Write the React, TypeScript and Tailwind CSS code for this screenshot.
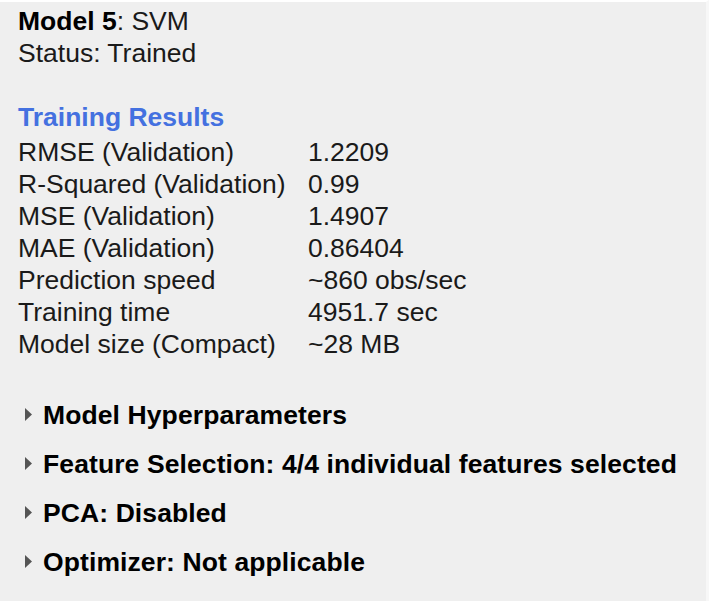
const results: [string, string][] = [
  ["RMSE (Validation)", "1.2209"],
  ["R-Squared (Validation)", "0.99"],
  ["MSE (Validation)", "1.4907"],
  ["MAE (Validation)", "0.86404"],
  ["Prediction speed", "~860 obs/sec"],
  ["Training time", "4951.7 sec"],
  ["Model size (Compact)", "~28 MB"],
];

const sections = [
  "Model Hyperparameters",
  "Feature Selection: 4/4 individual features selected",
  "PCA: Disabled",
  "Optimizer: Not applicable",
];

function Caret() {
  return (
    <svg width="10" height="17" viewBox="0 0 10 17" className="shrink-0">
      <polygon points="2,2 9,8.5 2,15" fill="#555555" />
    </svg>
  );
}

export default function App() {
  return (
    <div className="w-[709px] min-h-[601px] bg-[#efefef] border-t-2 border-t-white border-r-[3px] border-r-[#f7f7f7] pl-[18px] pt-[3px] font-['Liberation_Sans',Arial,sans-serif] text-[26.5px] leading-[32px] text-[#1a1a1a]">
      {/* Model header */}
      <div>
        <span className="font-bold text-black">Model 5</span>: SVM
      </div>
      <div>Status: Trained</div>

      {/* Training results */}
      <div className="mt-[32px] mb-[3px] font-bold text-[#4471e0]">Training Results</div>
      <div className="grid grid-cols-[290px_1fr]">
        {results.map(([label, value]) => (
          <div key={label} className="contents">
            <span className="whitespace-nowrap">{label}</span>
            <span className="whitespace-nowrap">{value}</span>
          </div>
        ))}
      </div>

      {/* Collapsed sections */}
      <div className="mt-[30px] flex flex-col">
        {sections.map((s) => (
          <div key={s} className="h-[49px] flex items-center gap-[10px] pl-[5px]">
            <Caret />
            <span className="font-bold text-black whitespace-nowrap tracking-[0.1px]">{s}</span>
          </div>
        ))}
      </div>
    </div>
  );
}
